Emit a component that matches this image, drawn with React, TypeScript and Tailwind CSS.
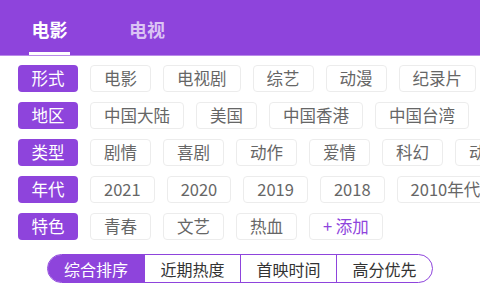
import React from "react";

const rows = [
  { label: "形式", items: ["电影", "电视剧", "综艺", "动漫", "纪录片"] },
  { label: "地区", items: ["中国大陆", "美国", "中国香港", "中国台湾"] },
  { label: "类型", items: ["剧情", "喜剧", "动作", "爱情", "科幻", "动画"] },
  { label: "年代", items: ["2021", "2020", "2019", "2018", "2010年代"] },
  { label: "特色", items: ["青春", "文艺", "热血"] },
];

const sorts = ["综合排序", "近期热度", "首映时间", "高分优先"];

export default function App() {
  return (
    <div
      className="w-[480px] h-[289px] overflow-hidden bg-white"
      style={{ fontFamily: '"Noto Sans CJK SC", "Noto Sans", sans-serif' }}
    >
      {/* Header tabs */}
      <div className="h-[56px] bg-[#8e44dc] flex items-end pl-[29px] gap-[59px] border-b border-[#b98ae8]">
        <div className="flex flex-col items-center">
          <span className="text-[18px] font-bold text-white leading-none mb-[14px]">电影</span>
          <div className="w-[41px] h-[3px] bg-white" />
        </div>
        <div className="flex flex-col items-center">
          <span className="text-[18px] font-bold text-white/70 leading-none mb-[17px]">电视</span>
        </div>
      </div>

      {/* Filter rows */}
      <div className="flex flex-col gap-[10px] pt-[9px] pl-[18px]">
        {rows.map((row) => (
          <div key={row.label} className="flex gap-[12px] h-[27px] overflow-hidden">
            <div className="w-[60px] shrink-0 rounded-[4px] bg-[#8e44dc] text-white text-[16.5px] leading-none flex items-center justify-center">
              {row.label}
            </div>
            {row.items.map((item) => (
              <div
                key={item}
                className="shrink-0 px-[13px] rounded-[4px] border border-[#ececec] text-[#666] text-[16.5px] leading-none flex items-center whitespace-nowrap"
              >
                {item}
              </div>
            ))}
            {row.label === "特色" && (
              <div className="shrink-0 px-[13px] rounded-[4px] border border-[#ececec] text-[#8e44dc] text-[16.5px] leading-none flex items-center whitespace-nowrap">
                + 添加
              </div>
            )}
          </div>
        ))}
      </div>

      {/* Sort segmented control */}
      <div className="flex justify-center mt-[14px]">
        <div className="flex h-[29px] rounded-full border border-[#8e44dc] overflow-hidden">
          {sorts.map((s, i) => (
            <div
              key={s}
              className={
                i === 0
                  ? "w-[96px] flex items-center justify-center bg-[#8e44dc] text-white text-[16px] leading-none"
                  : "w-[96px] flex items-center justify-center border-l border-[#8e44dc] text-[#333] text-[16px] leading-none"
              }
            >
              {s}
            </div>
          ))}
        </div>
      </div>
    </div>
  );
}
